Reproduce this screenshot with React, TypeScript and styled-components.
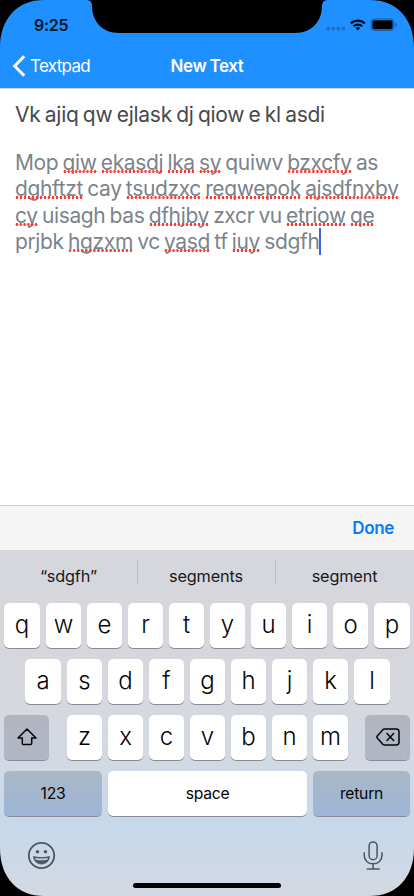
import React from "react";
import styled, { createGlobalStyle } from "styled-components";

const Global = createGlobalStyle`
  * { box-sizing: border-box; }
  body { margin: 0; background: #000; font-family: Inter, "Liberation Sans", sans-serif; }
`;

const Phone = styled.div`
  position: relative;
  width: 414px;
  height: 896px;
  display: flex;
  flex-direction: column;
  overflow: hidden;
  background: #fff;
`;

const Bezel = styled.svg`
  position: absolute;
  inset: 0;
  pointer-events: none;
`;

const Header = styled.header`
  height: 89px;
  background: #1e90ff;
  border-bottom: 1px solid #d3d3d6;
`;

const StatusBar = styled.div`
  height: 44px;
  padding: 5px 16px 0 34px;
  display: flex;
  justify-content: space-between;
  align-items: center;
`;

const Clock = styled.span`
  font-size: 16px;
  font-weight: 600;
  letter-spacing: -0.25px;
  color: #06182b;
`;

const NavBar = styled.div`
  height: 44px;
  padding: 0 12px;
  display: grid;
  grid-template-columns: 1fr auto 1fr;
  align-items: center;
  color: #fff;
`;

const Back = styled.div`
  display: flex;
  align-items: center;
  gap: 4px;
  font-size: 17px;
  font-weight: 400;
  letter-spacing: -0.7px;
`;

const NavTitle = styled.h1`
  margin: 0;
  font-size: 17px;
  font-weight: 600;
  letter-spacing: -0.4px;
  word-spacing: -0.8px;
`;

const Editor = styled.main`
  flex: 1;
  padding: 12px 15px;
  white-space: nowrap;
  word-spacing: -1.35px;
`;

const Title = styled.div`
  height: 49px;
  line-height: 27px;
  font-size: 21px;
  letter-spacing: -0.25px;
  word-spacing: -1.4px;
  color: #47494d;
`;

const Line = styled.div`
  height: 26.3px;
  line-height: 26.3px;
  font-size: 21px;
  letter-spacing: -0.36px;
  color: #7b838b;
`;

const Misspelled = styled.span`
  position: relative;
  display: inline-block;
  height: 26.3px;
  &::after {
    content: "";
    position: absolute;
    left: 0;
    right: 0;
    top: 20px;
    height: 3px;
    background: radial-gradient(circle at 50% 50%, #fb3c35 1.2px, transparent 1.6px) 0 0 / 4px 3px round;
  }
`;

const Caret = styled.i`
  display: inline-block;
  width: 2px;
  height: 27px;
  margin-top: -1px;
  vertical-align: top;
  background: #3f62e0;
`;

const Accessory = styled.div`
  height: 45px;
  padding: 0 20px;
  border-top: 1px solid #cfcfd1;
  background: #f5f5f5;
  display: flex;
  align-items: center;
  justify-content: flex-end;
`;

const Done = styled.span`
  color: #087bff;
  font-size: 17px;
  font-weight: 600;
  letter-spacing: -0.35px;
`;

const Keyboard = styled.section`
  height: 346px;
  background: linear-gradient(#d5d7dd 0, #d6d7dc 100px, #d5d8df 160px, #d2d9e3 210px, #c7d8eb 275px, #c9d8e9 295px, #d1d9e4 335px, #d3d9e3);
  color: #050505;
`;

const Suggestions = styled.div`
  height: 53px;
  display: grid;
  grid-template-columns: 137px 138px 139px;
`;

const Suggestion = styled.div`
  height: 51px;
  display: flex;
  align-items: center;
  justify-content: center;
  font-size: 16.3px;
  letter-spacing: -0.15px;
  color: #17181a;
  & + & {
    background: linear-gradient(#bcbec4, #bcbec4) 0 10px / 1px 25px no-repeat;
  }
`;

const KeyRow = styled.div<{ $inset?: string }>`
  height: 56px;
  padding: 0 ${(p) => p.$inset ?? "4px"};
  display: flex;
  gap: 6px;
`;

const Key = styled.div<{ $tone?: "gray" | "blue"; $width?: number; $label?: boolean }>`
  height: 45px;
  flex: ${(p) => (p.$width ? `0 0 ${p.$width}px` : "1 1 0")};
  display: flex;
  align-items: center;
  justify-content: center;
  padding-bottom: ${(p) => (p.$label ? 1 : 3)}px;
  border-radius: 5px;
  background: ${(p) =>
    p.$tone === "gray"
      ? "linear-gradient(#b0b5c0, #b0b8c5)"
      : p.$tone === "blue"
        ? "linear-gradient(#aab7c5, #9db6d7)"
        : "#fff"};
  box-shadow: 0 1px 0 #898c92;
  font-size: ${(p) => (p.$label ? 15.7 : 24)}px;
  font-weight: ${(p) => (p.$label ? 400 : 300)};
  letter-spacing: ${(p) => (p.$label ? "-0.25px" : "0")};
`;

const Letters = styled.div`
  flex: 1;
  display: flex;
  gap: 6px;
  padding: 0 11px 0 12px;
`;

const Tools = styled.div`
  padding: 14px 30px 0 27px;
  display: flex;
  justify-content: space-between;
  align-items: flex-start;
`;

const HomeBar = styled.div`
  position: absolute;
  left: 133px;
  bottom: 8px;
  width: 148px;
  height: 5px;
  border-radius: 3px;
  background: #000;
`;

type Word = string | { w: string };
const bad = (w: string): Word => ({ w });

const lines: Word[][] = [
  ["Mop", bad("qiw"), bad("ekasdj"), bad("lka"), bad("sy"), "quiwv", bad("bzxcfy"), "as"],
  [bad("dghftzt"), "cay", bad("tsudzxc"), bad("reqwepok"), bad("ajsdfnxbv")],
  [bad("cy"), "uisagh", "bas", bad("dfhjby"), "zxcr", "vu", bad("etriow"), bad("qe")],
  ["prjbk", bad("hgzxm"), "vc", bad("yasd"), "tf", bad("iuy"), "sdgfh"],
];

// The outermost keys of a full row are one pixel wider than the rest.
const keys = (s: string, wideEnds = true) =>
  s.split("").map((k, i) => (
    <Key key={k} $width={wideEnds && (i === 0 || i === s.length - 1) ? 36 : 35}>
      {k}
    </Key>
  ));

const StatusIcons = () => (
  <svg width="72" height="16" viewBox="326 17 72 16">
    <g fill="#1b6fc4">
      <circle cx="328.3" cy="28.7" r="1.9" />
      <circle cx="333.3" cy="28.7" r="1.9" />
      <circle cx="338.3" cy="28.7" r="1.9" />
      <circle cx="343.3" cy="28.7" r="1.9" />
    </g>
    <g fill="none" stroke="#03101f" strokeWidth="2.2">
      <path d="M350.7 23.4a10.3 10.3 0 0 1 14.2 0" />
      <path d="M353.3 26.3a6.6 6.6 0 0 1 9 0" />
    </g>
    <path d="M355.4 27.9a3.6 3.6 0 0 1 4.8 0l-2.4 2.5z" fill="#03101f" />
    <rect x="371.2" y="19" width="22.6" height="11.4" rx="3" fill="none" stroke="#155aa0" />
    <rect x="372.4" y="20.2" width="20.2" height="9" rx="1.6" fill="#000" />
    <path d="M395.2 22.8v4c2-.7 2-3.3 0-4z" fill="#155aa0" />
  </svg>
);

const Smiley = () => (
  <svg width="29" height="29" viewBox="0 0 29 29">
    <circle cx="14.5" cy="14.5" r="12.7" fill="none" stroke="#4c5560" strokeWidth="1.8" />
    <circle cx="10.5" cy="10.8" r="1.7" fill="#4c5560" />
    <circle cx="18.5" cy="10.8" r="1.7" fill="#4c5560" />
    <path d="M6.5 15.6c5 1.2 11 1.2 16 0-.4 4.5-3.6 7.4-8 7.4s-7.6-2.9-8-7.4z" fill="#4c5560" stroke="#4c5560" strokeWidth=".8" strokeLinejoin="round" />
    <path d="M8 16.9c4.200.8 8.800.8 13 0-.3 1-.6 1.400-1 1.800-3.400.7-7.600.7-11 0-.4-.4-.8-.9-1-1.800z" fill="#c9d8e9" />
  </svg>
);

const Mic = () => (
  <svg width="22" height="31" viewBox="0 0 22 31" fill="none" stroke="#4c5560" strokeWidth="1.5" strokeLinecap="round">
    <rect x="7.1" y="0.9" width="8" height="17.8" rx="4" />
    <path d="M2.200 11.800v2.500c0 5 3.800 8.500 8.900 8.500s8.900-3.500 8.900-8.500v-2.500M11.100 22.800v5M5.200 28h12" />
  </svg>
);

export default function App() {
  return (
    <>
      <Global />
      <Phone>
        <Header>
          <StatusBar>
            <Clock>9:25</Clock>
            <StatusIcons />
          </StatusBar>
          <NavBar>
            <Back>
              <svg width="14" height="22" viewBox="0 0 14 22" fill="none" stroke="#fff" strokeWidth="3">
                <path d="M12.2 1.3 2.7 11l9.5 9.7" />
              </svg>
              Textpad
            </Back>
            <NavTitle>New Text</NavTitle>
          </NavBar>
        </Header>
        <Editor>
          <Title>Vk ajiq qw ejlask dj qiow e kl asdi</Title>
          {lines.map((line, i) => (
            <Line key={i}>
              {line.map((word, j) => (
                <React.Fragment key={j}>
                  {j > 0 && " "}
                  {typeof word === "string" ? word : <Misspelled>{word.w}</Misspelled>}
                </React.Fragment>
              ))}
              {i === lines.length - 1 && <Caret />}
            </Line>
          ))}
        </Editor>
        <Accessory>
          <Done>Done</Done>
        </Accessory>
        <Keyboard>
          <Suggestions>
            <Suggestion>“sdgfh”</Suggestion>
            <Suggestion>segments</Suggestion>
            <Suggestion>segment</Suggestion>
          </Suggestions>
          <KeyRow>{keys("qwertyuiop")}</KeyRow>
          <KeyRow $inset="24px 0 25px">{keys("asdfghjkl")}</KeyRow>
          <KeyRow>
            <Key $tone="gray" $width={45} $label>
              <svg width="20" height="18" viewBox="0 0 20 18" fill="none" stroke="#050505" strokeWidth="1.5" strokeLinejoin="round">
                <path d="M10 1 19 10h-4.300v5.500q0 1-1 1H6.300q-1 0-1-1V10H1z" />
              </svg>
            </Key>
            <Letters>{keys("zxcvbnm", false)}</Letters>
            <Key $tone="gray" $width={45} $label>
              <svg width="24" height="18" viewBox="0 0 24 18" fill="none" stroke="#050505" strokeWidth="1.5" strokeLinejoin="round" strokeLinecap="round">
                <path d="M8.500 1h11.800Q23 1 23 3.700v10.600Q23 17 20.300 17H8.500q-1 0-1.700-.8L1.300 10q-.8-1 0-2l5.500-6.200Q7.500 1 8.500 1zM11 5.600l6.600 6.800M17.600 5.600 11 12.400" />
              </svg>
            </Key>
          </KeyRow>
          <KeyRow>
            <Key $tone="blue" $width={98} $label>123</Key>
            <Key $label>space</Key>
            <Key $tone="blue" $width={97} $label>return</Key>
          </KeyRow>
          <Tools>
            <Smiley />
            <Mic />
          </Tools>
        </Keyboard>
        <HomeBar />
        <Bezel width="414" height="896" viewBox="0 0 414 896">
          <path d="M0 0H44C18 0 0 18 0 48zM414 0H370C396 0 414 18 414 48zM0 896V848C0 878 18 896 44 896zM414 896V848C414 878 396 896 370 896z" />
          <path d="M86 0C90 0 92 2 92 6 92 22 103 33 119 33H295C311 33 322 22 322 6 322 2 324 0 328 0z" />
        </Bezel>
      </Phone>
    </>
  );
}
